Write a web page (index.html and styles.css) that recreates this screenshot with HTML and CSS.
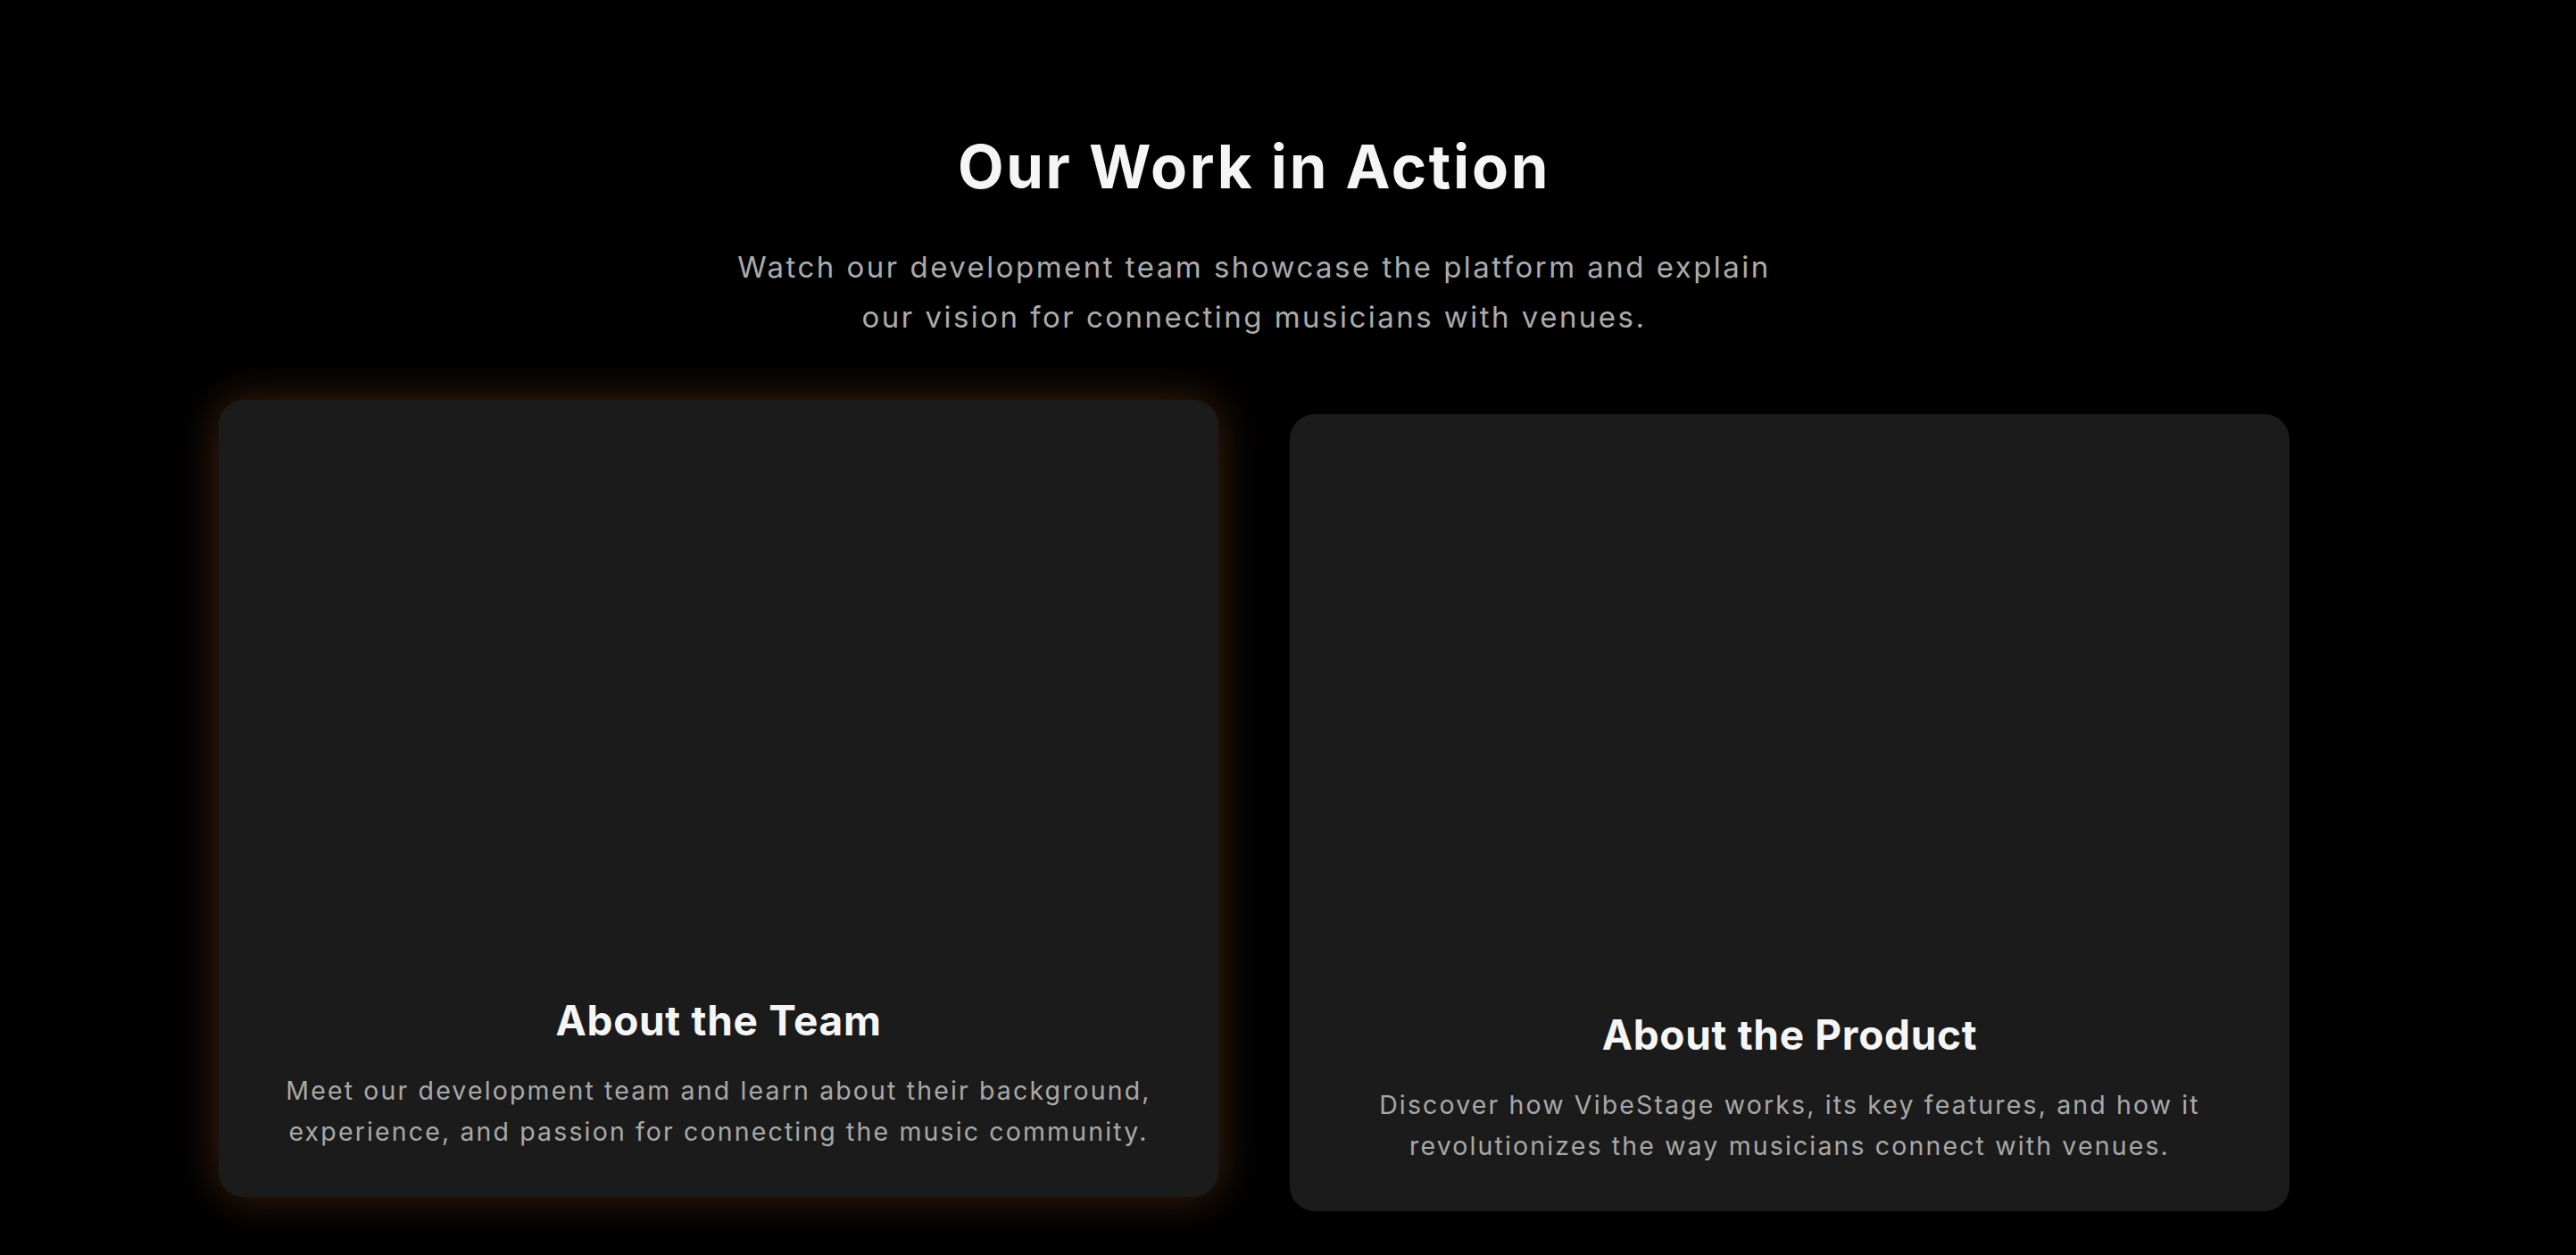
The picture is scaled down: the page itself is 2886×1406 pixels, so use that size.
FILE: index.html
```html
<!DOCTYPE html>
<html lang="en">
<head>
<meta charset="utf-8">
<title>Our Work in Action</title>
<link rel="stylesheet" href="styles.css">
</head>
<body>
<main class="page">
  <section class="work">
    <h1 class="work-title">Our Work in Action</h1>
    <p class="work-subtitle">Watch our development team showcase the platform and explain our vision for connecting musicians with venues.</p>
    <div class="work-grid">
      <article class="card card-active">
        <div class="card-media"></div>
        <div class="card-body">
          <h2 class="card-title">About the Team</h2>
          <p class="card-text">Meet our development team and learn about their background, experience, and passion for connecting the music community.</p>
        </div>
      </article>
      <article class="card">
        <div class="card-media"></div>
        <div class="card-body">
          <h2 class="card-title">About the Product</h2>
          <p class="card-text">Discover how VibeStage works, its key features, and how it revolutionizes the way musicians connect with venues.</p>
        </div>
      </article>
    </div>
  </section>
</main>
</body>
</html>
```

FILE: styles.css
```css
* { box-sizing: border-box; }

html, body {
  margin: 0;
  padding: 0;
  background: #000;
}

body {
  font-family: Inter, "Noto Sans", "Liberation Sans", sans-serif;
  color: #f5f5f5;
  min-height: 1406px;
  overflow: hidden;
}

.page {
  width: 2810px;
}

.work {
  display: flex;
  flex-direction: column;
  align-items: center;
  padding-top: 147px;
}

.work-title {
  margin: 0;
  font-size: 67px;
  line-height: 1.2;
  font-weight: 700;
  color: #f5f5f5;
  letter-spacing: 0.04em;
}

.work-subtitle {
  margin: 44px 0 0;
  max-width: 1200px;
  text-align: center;
  font-size: 33px;
  line-height: 56px;
  font-weight: 400;
  color: #ababab;
  letter-spacing: 0.075em;
}

.work-grid {
  margin-top: 81px;
  display: grid;
  grid-template-columns: 1120px 1120px;
  gap: 80px;
}

.card {
  background: #1b1b1b;
  border-radius: 28px;
  display: flex;
  flex-direction: column;
}

.card-active {
  transform: translateY(-16px);
  box-shadow: 0 0 50px rgba(255, 140, 60, 0.25);
}

.card-media {
  aspect-ratio: 16 / 9;
  width: 100%;
}

.card-body {
  padding: 38px 48px 50px;
  text-align: center;
}

.card-title {
  margin: 0;
  font-size: 46px;
  line-height: 1.2;
  font-weight: 700;
  color: #f5f5f5;
  letter-spacing: 0.015em;
}

.card-text {
  margin: 27px 0 0;
  font-size: 28.5px;
  line-height: 46px;
  color: #a8a8a8;
  letter-spacing: 0.075em;
}
```
